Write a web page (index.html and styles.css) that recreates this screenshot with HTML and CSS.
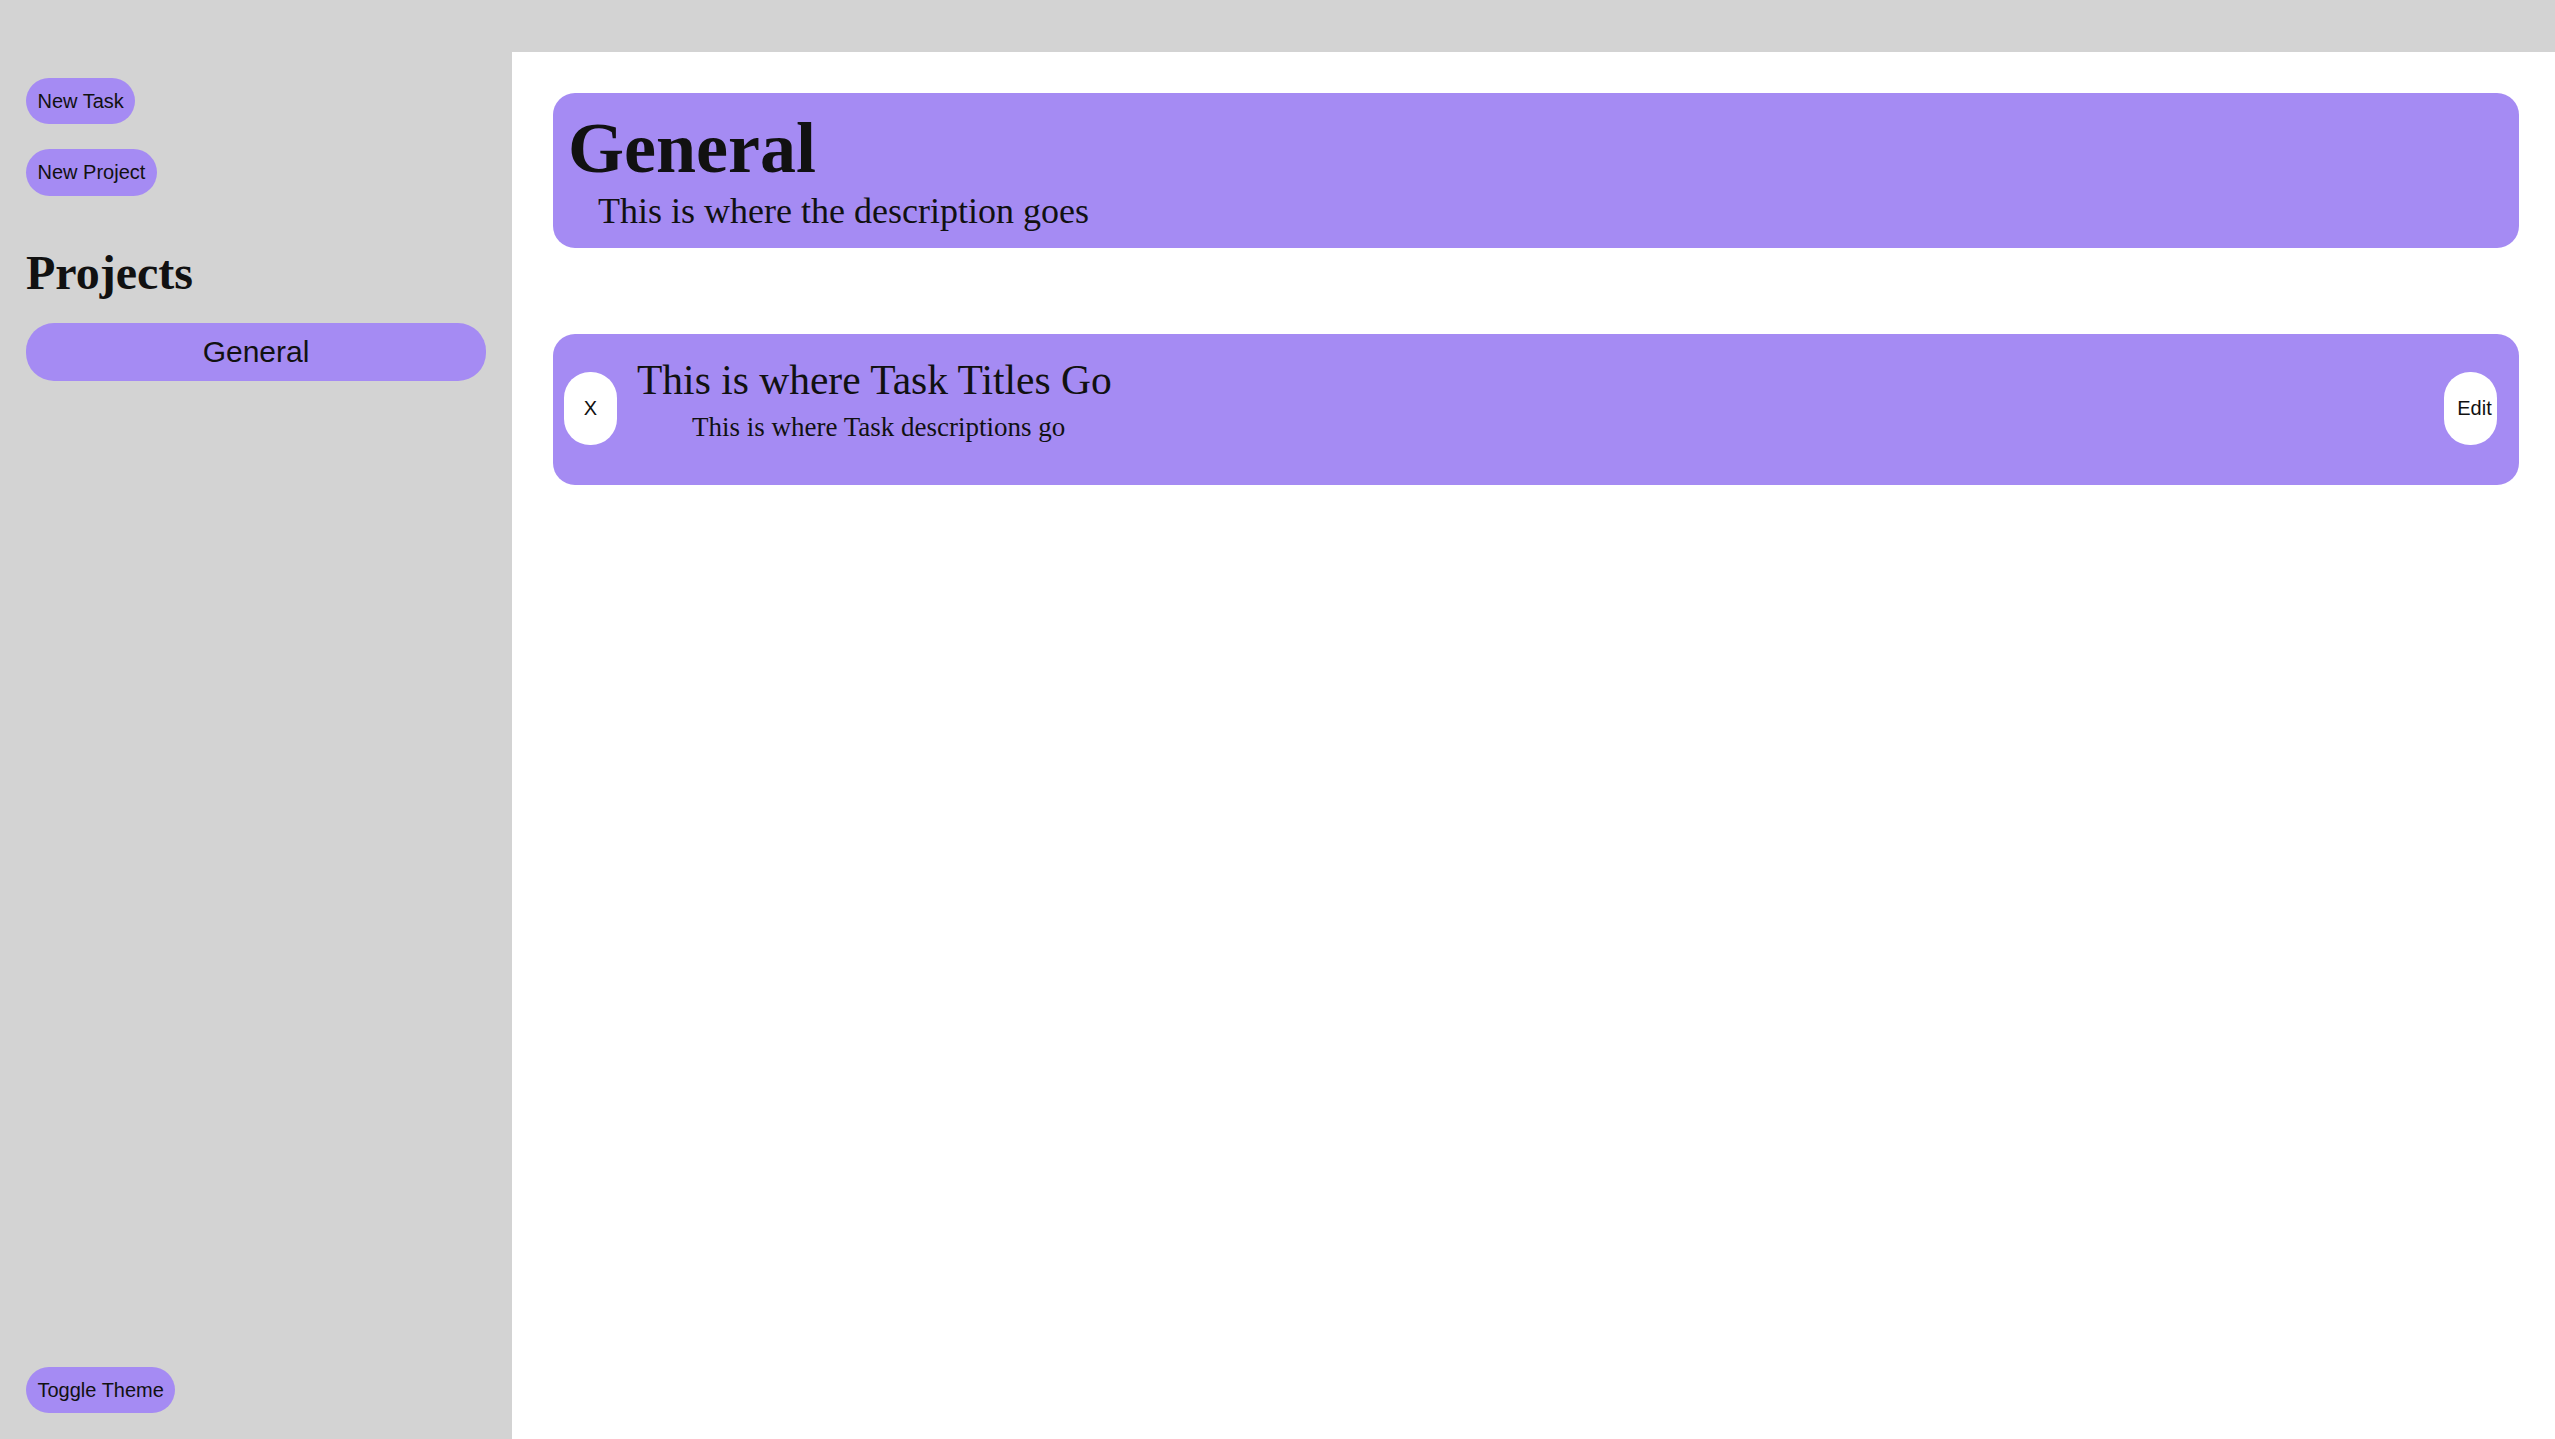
FILE: index.html
```html
<!DOCTYPE html>
<html lang="en">
<head>
<meta charset="utf-8">
<title>Todo</title>
<link rel="stylesheet" href="styles.css">
</head>
<body>
<div class="topbar"></div>
<div class="layout">
  <aside class="sidebar">
    <button class="pill">New Task</button>
    <button class="pill">New Project</button>
    <h1 class="projects-title">Projects</h1>
    <button class="project-btn">General</button>
    <button class="pill toggle">Toggle Theme</button>
  </aside>
  <main class="main">
    <section class="project-header">
      <h1 class="project-name">General</h1>
      <p class="project-desc">This is where the description goes</p>
    </section>
    <div class="task">
      <button class="task-btn">X</button>
      <div class="task-text">
        <h2 class="task-title">This is where Task Titles Go</h2>
        <p class="task-desc">This is where Task descriptions go</p>
      </div>
      <button class="task-btn edit">Edit</button>
    </div>
  </main>
</div>
</body>
</html>
```
FILE: styles.css
```css
* { box-sizing: border-box; }
html, body { margin: 0; padding: 0; }
body {
  background: #d3d3d3;
  color: #111;
  font-family: "Liberation Serif", "Times New Roman", serif;
  width: 2555px;
  height: 1439px;
  overflow: hidden;
}
.topbar { height: 52px; }
.layout {
  display: flex;
  height: 1387px;
}
.sidebar {
  width: 512px;
  flex: none;
  display: flex;
  flex-direction: column;
  align-items: flex-start;
  padding: 26px;
}
.pill {
  font-family: "Liberation Sans", Arial, sans-serif;
  font-size: 20px;
  line-height: 22px;
  color: #111;
  background: #a58bf3;
  border: none;
  border-radius: 24px;
  padding: 12px 11.5px;
  margin: 0 0 25px 0;
}
.pill + .pill { padding-bottom: 13px; }
.projects-title {
  font-size: 48px;
  font-weight: bold;
  line-height: 55px;
  margin: 24px 0 23px 0;
}
.project-btn {
  width: 460px;
  font-family: "Liberation Sans", Arial, sans-serif;
  font-size: 30px;
  line-height: 34px;
  color: #111;
  background: #a58bf3;
  border: none;
  border-radius: 28px;
  padding: 12px;
}
.sidebar .toggle { margin: auto 0 0 0; padding-bottom: 12px; }
.main {
  flex: 1;
  background: #fff;
  padding: 41px 36px 0 41px;
}
.project-header {
  background: #a58bf3;
  border-radius: 22px;
  padding: 14px 15px 16px 15px;
  margin-bottom: 86px;
}
.project-name {
  font-size: 72px;
  font-weight: bold;
  line-height: 83px;
  margin: 0;
}
.project-desc {
  font-size: 36px;
  line-height: 41px;
  margin: 1px 0 0 30px;
}
.task {
  background: #a58bf3;
  border-radius: 22px;
  display: flex;
  align-items: flex-start;
  padding: 23px 22px 40px 11px;
}
.task-btn {
  flex: none;
  margin-top: 15px;
  width: 53px;
  height: 73px;
  background: #fff;
  border: none;
  border-radius: 26px;
  font-family: "Liberation Sans", Arial, sans-serif;
  font-size: 20px;
  color: #111;
  padding: 0;
}
.task-btn.edit { margin-left: auto; padding-left: 8px; }
.task-text { margin-left: 20px; }
.task-title {
  font-size: 41.5px;
  font-weight: normal;
  line-height: 47px;
  margin: 0;
}
.task-desc {
  font-size: 27px;
  line-height: 31px;
  margin: 8px 0 0 55px;
}
```
